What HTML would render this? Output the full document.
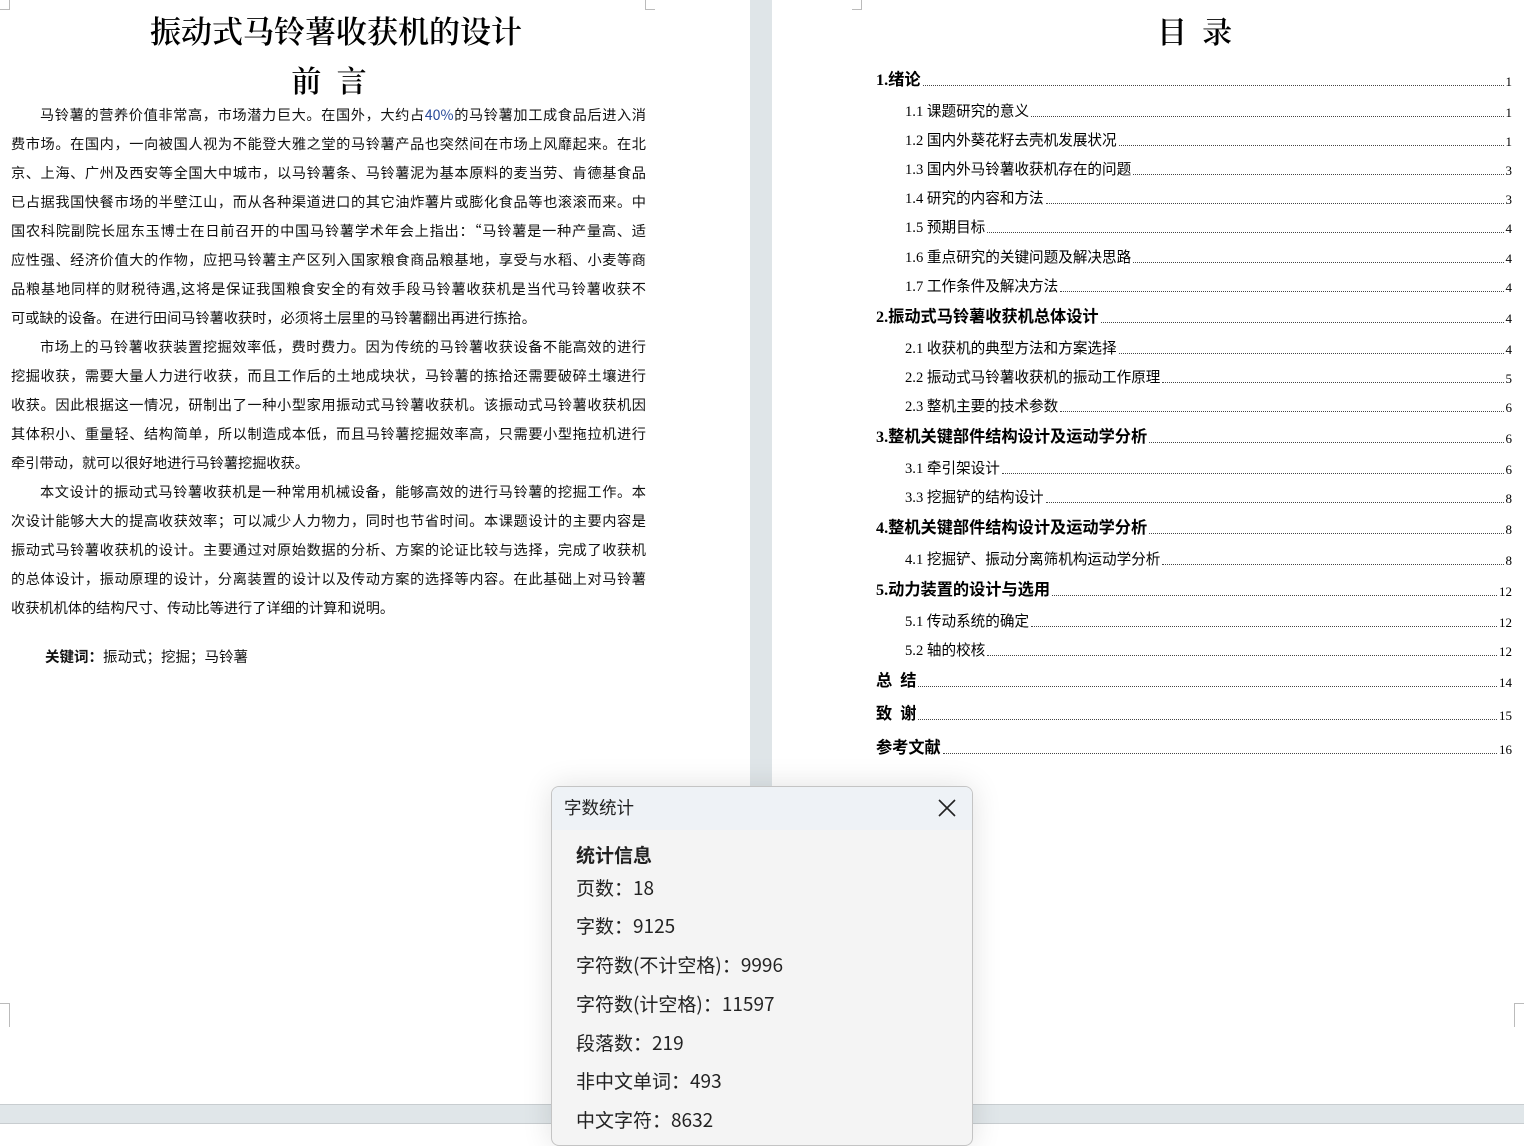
<!DOCTYPE html>
<html><head><meta charset="utf-8"><style>
*{margin:0;padding:0;box-sizing:border-box}
body{width:1524px;height:1143px;overflow:hidden;background:#fff;position:relative;font-family:"Liberation Serif","Noto Serif CJK SC","Noto Sans CJK SC",serif;color:#000}
.gap{position:absolute;left:750px;top:0;width:22px;height:1104px;background:#dfe5e8}
.strip{position:absolute;left:0;top:1104px;width:1524px;height:20px;background:#e0e6e9;border-top:1px solid #c8cdd0;border-bottom:1px solid #c8cdd0}
.title{position:absolute;left:0;width:750px;text-align:center;font-weight:600;font-family:"Noto Serif CJK SC",serif}
.p{position:absolute;left:11px;width:635px;font-size:14.2px;line-height:29px;font-family:"Noto Sans CJK SC",sans-serif;font-weight:400;color:#111}
.p div{text-align:justify;text-align-last:justify;height:29px;white-space:nowrap}
.p div.l{text-align-last:left}
.p .i{padding-left:29px}
.toc{display:flex;align-items:flex-end;font-size:14.6px}
.toc .t{white-space:nowrap;font-family:"Liberation Serif","Noto Sans CJK SC",sans-serif}
.toc .d{flex:1;border-bottom:1px dotted #444;margin:0 2px 4px}
.toc .n{text-align:right;font-family:"Liberation Serif",serif;font-size:13px;font-weight:normal}
.h1{font-weight:bold;font-size:16.2px;font-family:"Liberation Serif","Noto Serif CJK SC",serif}
.h2 .t{font-weight:400}
.dlg{position:absolute;left:551px;top:786px;width:422px;height:360px;background:#f4f4f4;border:1px solid #c4c4c4;border-radius:8px;overflow:hidden;font-family:"Noto Sans CJK SC",sans-serif;color:#222;box-shadow:0 0 30px rgba(0,0,0,.12)}
.dh{height:43px;background:#eef2f6;font-size:17.5px;padding:8px 12px}
.x{position:absolute;right:16px;top:12px;width:18px;height:18px}
.it{position:absolute;left:24px;font-size:19px}
.mk{position:absolute;width:10px;height:10px;border-color:#bbb;border-style:solid;border-width:0}
.r{position:absolute;left:0;right:0;height:20px}.r.s{left:29px}
</style></head><body>
<div class="gap"></div>
<div class="strip"></div>
<div class="mk" style="left:0;top:0;border-right-width:1px;border-bottom-width:1px"></div>
<div class="mk" style="left:645px;top:0;border-left-width:1px;border-bottom-width:1px"></div>
<div class="mk" style="left:852px;top:0;border-right-width:1px;border-bottom-width:1px"></div>
<div class="mk" style="left:0;top:1003px;border-right-width:1px;border-top-width:1px;height:24px"></div>
<div class="mk" style="left:1514px;top:1003px;border-left-width:1px;border-top-width:1px;height:24px"></div>

<div class="title" style="top:7px;font-size:31px;left:-39px">振动式马铃薯收获机的设计</div>
<div class="title" style="top:57px;font-size:30px;left:-46px">前&nbsp;&nbsp;言</div>

<div class="p" style="top:101px">
<div class="i">马铃薯的营养价值非常高，市场潜力巨大。在国外，大约占<span style="color:#2a4a9a">40%</span>的马铃薯加工成食品后进入消</div>
<div>费市场。在国内，一向被国人视为不能登大雅之堂的马铃薯产品也突然间在市场上风靡起来。在北</div>
<div>京、上海、广州及西安等全国大中城市，以马铃薯条、马铃薯泥为基本原料的麦当劳、肯德基食品</div>
<div>已占据我国快餐市场的半壁江山，而从各种渠道进口的其它油炸薯片或膨化食品等也滚滚而来。中</div>
<div>国农科院副院长屈东玉博士在日前召开的中国马铃薯学术年会上指出：“马铃薯是一种产量高、适</div>
<div>应性强、经济价值大的作物，应把马铃薯主产区列入国家粮食商品粮基地，享受与水稻、小麦等商</div>
<div>品粮基地同样的财税待遇,这将是保证我国粮食安全的有效手段马铃薯收获机是当代马铃薯收获不</div>
<div class="l">可或缺的设备。在进行田间马铃薯收获时，必须将土层里的马铃薯翻出再进行拣拾。</div>
<div class="i">市场上的马铃薯收获装置挖掘效率低，费时费力。因为传统的马铃薯收获设备不能高效的进行</div>
<div>挖掘收获，需要大量人力进行收获，而且工作后的土地成块状，马铃薯的拣拾还需要破碎土壤进行</div>
<div>收获。因此根据这一情况，研制出了一种小型家用振动式马铃薯收获机。该振动式马铃薯收获机因</div>
<div>其体积小、重量轻、结构简单，所以制造成本低，而且马铃薯挖掘效率高，只需要小型拖拉机进行</div>
<div class="l">牵引带动，就可以很好地进行马铃薯挖掘收获。</div>
<div class="i">本文设计的振动式马铃薯收获机是一种常用机械设备，能够高效的进行马铃薯的挖掘工作。本</div>
<div>次设计能够大大的提高收获效率；可以减少人力物力，同时也节省时间。本课题设计的主要内容是</div>
<div>振动式马铃薯收获机的设计。主要通过对原始数据的分析、方案的论证比较与选择，完成了收获机</div>
<div>的总体设计，振动原理的设计，分离装置的设计以及传动方案的选择等内容。在此基础上对马铃薯</div>
<div class="l">收获机机体的结构尺寸、传动比等进行了详细的计算和说明。</div>
</div>
<div style="position:absolute;left:45px;top:646px;font-size:14.5px;font-family:'Noto Sans CJK SC',sans-serif;color:#111"><b>关键词：</b>振动式；挖掘；马铃薯</div>

<div style="position:absolute;left:1157px;top:8px;font-size:30px;font-weight:600;font-family:'Noto Serif CJK SC',serif">目&nbsp;&nbsp;录</div>

<div style="position:absolute;left:876px;top:0;width:636px;height:800px">
<div class="toc r h1" style="top:70px"><span class="t">1.绪论</span><span class="d"></span><span class="n">1</span></div>
<div class="toc r s h2" style="top:101px"><span class="t">1.1 课题研究的意义</span><span class="d"></span><span class="n">1</span></div>
<div class="toc r s h2" style="top:130px"><span class="t">1.2 国内外葵花籽去壳机发展状况</span><span class="d"></span><span class="n">1</span></div>
<div class="toc r s h2" style="top:159px"><span class="t">1.3 国内外马铃薯收获机存在的问题</span><span class="d"></span><span class="n">3</span></div>
<div class="toc r s h2" style="top:188px"><span class="t">1.4 研究的内容和方法</span><span class="d"></span><span class="n">3</span></div>
<div class="toc r s h2" style="top:217px"><span class="t">1.5 预期目标</span><span class="d"></span><span class="n">4</span></div>
<div class="toc r s h2" style="top:247px"><span class="t">1.6 重点研究的关键问题及解决思路</span><span class="d"></span><span class="n">4</span></div>
<div class="toc r s h2" style="top:276px"><span class="t">1.7 工作条件及解决方法</span><span class="d"></span><span class="n">4</span></div>
<div class="toc r h1" style="top:307px"><span class="t">2.振动式马铃薯收获机总体设计</span><span class="d"></span><span class="n">4</span></div>
<div class="toc r s h2" style="top:338px"><span class="t">2.1 收获机的典型方法和方案选择</span><span class="d"></span><span class="n">4</span></div>
<div class="toc r s h2" style="top:367px"><span class="t">2.2 振动式马铃薯收获机的振动工作原理</span><span class="d"></span><span class="n">5</span></div>
<div class="toc r s h2" style="top:396px"><span class="t">2.3 整机主要的技术参数</span><span class="d"></span><span class="n">6</span></div>
<div class="toc r h1" style="top:427px"><span class="t">3.整机关键部件结构设计及运动学分析</span><span class="d"></span><span class="n">6</span></div>
<div class="toc r s h2" style="top:458px"><span class="t">3.1 牵引架设计</span><span class="d"></span><span class="n">6</span></div>
<div class="toc r s h2" style="top:487px"><span class="t">3.3 挖掘铲的结构设计</span><span class="d"></span><span class="n">8</span></div>
<div class="toc r h1" style="top:518px"><span class="t">4.整机关键部件结构设计及运动学分析</span><span class="d"></span><span class="n">8</span></div>
<div class="toc r s h2" style="top:549px"><span class="t">4.1 挖掘铲、振动分离筛机构运动学分析</span><span class="d"></span><span class="n">8</span></div>
<div class="toc r h1" style="top:580px"><span class="t">5.动力装置的设计与选用</span><span class="d"></span><span class="n">12</span></div>
<div class="toc r s h2" style="top:611px"><span class="t">5.1 传动系统的确定</span><span class="d"></span><span class="n">12</span></div>
<div class="toc r s h2" style="top:640px"><span class="t">5.2 轴的校核</span><span class="d"></span><span class="n">12</span></div>
<div class="toc r h1" style="top:671px"><span class="t">总&nbsp;&nbsp;结</span><span class="d"></span><span class="n">14</span></div>
<div class="toc r h1" style="top:704px"><span class="t">致&nbsp;&nbsp;谢</span><span class="d"></span><span class="n">15</span></div>
<div class="toc r h1" style="top:738px"><span class="t">参考文献</span><span class="d"></span><span class="n">16</span></div>
</div>

<div class="dlg">
<div class="dh">字数统计</div>
<svg class="x" viewBox="0 0 18 18"><path d="M1 1L17 17M17 1L1 17" stroke="#222" stroke-width="1.6"/></svg>
<div class="it" style="top:54px;font-weight:bold">统计信息</div>
<div class="it" style="top:87px">页数：18</div>
<div class="it" style="top:125px">字数：9125</div>
<div class="it" style="top:164px">字符数(不计空格)：9996</div>
<div class="it" style="top:203px">字符数(计空格)：11597</div>
<div class="it" style="top:242px">段落数：219</div>
<div class="it" style="top:280px">非中文单词：493</div>
<div class="it" style="top:319px">中文字符：8632</div>
</div>
</body></html>
